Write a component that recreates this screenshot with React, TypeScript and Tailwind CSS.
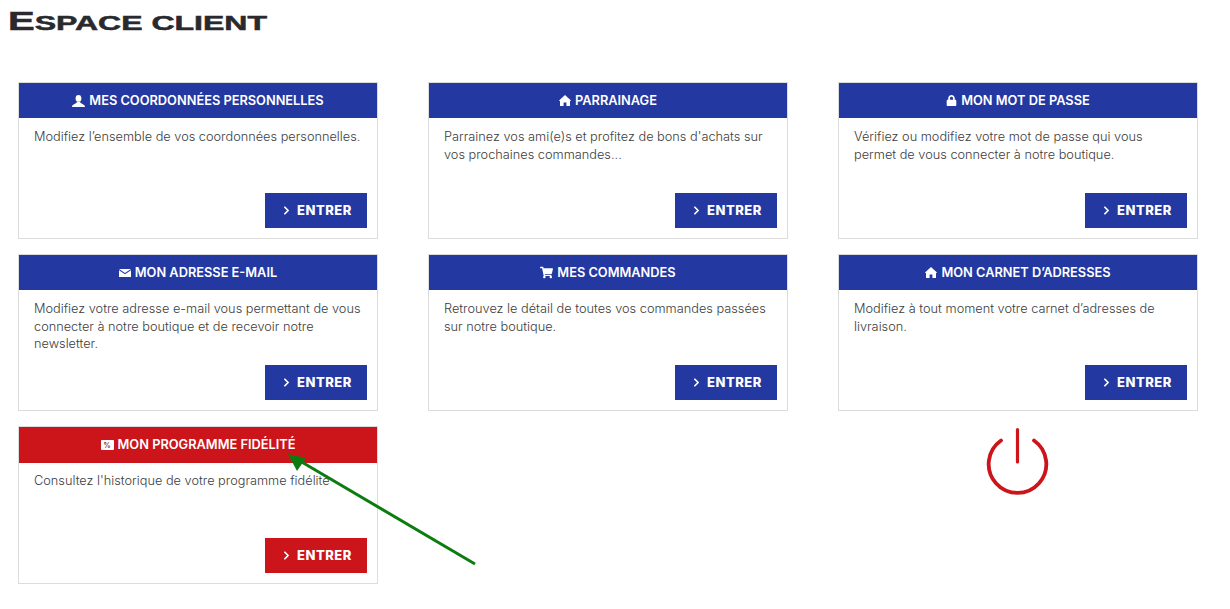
import { ChevronRight } from "lucide-react";
import type { ReactNode } from "react";
import { FaLock, FaShoppingCart } from "react-icons/fa";

type CardProps = {
  icon: ReactNode;
  title: string;
  text: ReactNode;
  red?: boolean;
};

function Card({ icon, title, text, red }: CardProps) {
  return (
    <div className="flex flex-col border border-[#dcdcdc] bg-white">
      <div
        className={`flex shrink-0 items-center justify-center gap-[4px] text-[12.8px] font-semibold text-white ${
          red ? "h-[36px] bg-[#cb151b]" : "h-[35px] bg-[#2338a1]"
        }`}
      >
        {icon}
        <span>{title}</span>
      </div>
      <p
        className={`pr-[12px] pl-[15px] text-[12.75px] leading-[17.5px] font-light text-[#3c3c3c] ${
          red ? "pt-[9px]" : "pt-[10px]"
        }`}
      >
        {text}
      </p>
      <div className="mt-auto flex justify-end pr-[10px] pb-[10px]">
        <a
          className={`flex h-[35px] w-[102px] items-center justify-center gap-[4px] text-[13px] font-extrabold tracking-[0.5px] text-white ${
            red ? "bg-[#cb151b]" : "bg-[#2338a1]"
          }`}
        >
          <ChevronRight size={13} strokeWidth={3.2} />
          ENTRER
        </a>
      </div>
    </div>
  );
}

function UserIcon() {
  return (
    <svg width="13" height="12" viewBox="0 0 13 12" fill="white">
      <ellipse cx="6.5" cy="3.4" rx="2.9" ry="3.4" />
      <path d="M0 12 C0 9 4 9.2 5 7 H8 C9 9.2 13 9 13 12 Z" />
    </svg>
  );
}

function HomeIcon() {
  return (
    <svg width="12" height="11" viewBox="0 0 12 11" fill="white">
      <path d="M6 0 L12 5.6 L11 6.3 V11 H7.4 V7.4 H4.6 V11 H1 V6.3 L0 5.6 Z" />
    </svg>
  );
}

function MailIcon() {
  return (
    <svg width="12" height="8" viewBox="0 0 12 8" fill="white">
      <path d="M0 0 H12 L6 4 Z" />
      <path d="M0 1.2 L6 5.2 L12 1.2 V8 H0 Z" />
    </svg>
  );
}

function PercentTag() {
  return (
    <span className="flex h-[10px] w-[13px] items-center justify-center rounded-[1px] bg-white text-[7px] leading-none font-bold text-[#8a2a2e]">
      %
    </span>
  );
}

function PowerIcon() {
  return (
    <svg width="70" height="72" viewBox="0 0 70 72" fill="none" stroke="#cb151b" strokeLinecap="round">
      <line x1="34.5" y1="3.5" x2="34.5" y2="36" strokeWidth="3.2" />
      <path d="M 18 14.5 A 28.8 28.8 0 1 0 51 14.5" strokeWidth="3.8" />
    </svg>
  );
}

export default function App() {
  return (
    <div className="relative h-[609px] w-[1230px] overflow-hidden bg-white font-['Inter',sans-serif]">
      <h1 className="ml-[8px] h-[82px] origin-left scale-x-[1.6] pt-[4px] font-['Liberation_Sans',sans-serif] text-[20px] leading-[34px] font-bold text-[#2a2a2e] [-webkit-text-stroke:0.5px_#2a2a2e]">
        <span className="text-[25px]">E</span>SPACE CLIENT
      </h1>

      <div className="ml-[18px] grid grid-cols-[360px_360px_360px] grid-rows-[157px_157px_158px] gap-x-[50px] gap-y-[15px]">
        <Card
          icon={<UserIcon />}
          title="MES COORDONNÉES PERSONNELLES"
          text="Modifiez l’ensemble de vos coordonnées personnelles."
        />
        <Card
          icon={<HomeIcon />}
          title="PARRAINAGE"
          text="Parrainez vos ami(e)s et profitez de bons d'achats sur vos prochaines commandes..."
        />
        <Card
          icon={<FaLock size={11} />}
          title="MON MOT DE PASSE"
          text="Vérifiez ou modifiez votre mot de passe qui vous permet de vous connecter à notre boutique."
        />
        <Card
          icon={<MailIcon />}
          title="MON ADRESSE E-MAIL"
          text="Modifiez votre adresse e-mail vous permettant de vous connecter à notre boutique et de recevoir notre newsletter."
        />
        <Card
          icon={<FaShoppingCart size={13} />}
          title="MES COMMANDES"
          text="Retrouvez le détail de toutes vos commandes passées sur notre boutique."
        />
        <Card
          icon={<HomeIcon />}
          title="MON CARNET D’ADRESSES"
          text="Modifiez à tout moment votre carnet d’adresses de livraison."
        />
        <Card
          red
          icon={<PercentTag />}
          title="MON PROGRAMME FIDÉLITÉ"
          text="Consultez l'historique de votre programme fidélité"
        />
        <div className="col-start-3 flex justify-center">
          <PowerIcon />
        </div>
      </div>

      {/* green annotation arrow over the page */}
      <svg className="absolute top-0 left-0" width="1230" height="609" fill="none">
        <line x1="475" y1="564" x2="300" y2="461" stroke="#0c7c0f" strokeWidth="3" />
        <polygon points="288,454 306,458 297,471" fill="#0c7c0f" />
      </svg>
    </div>
  );
}
